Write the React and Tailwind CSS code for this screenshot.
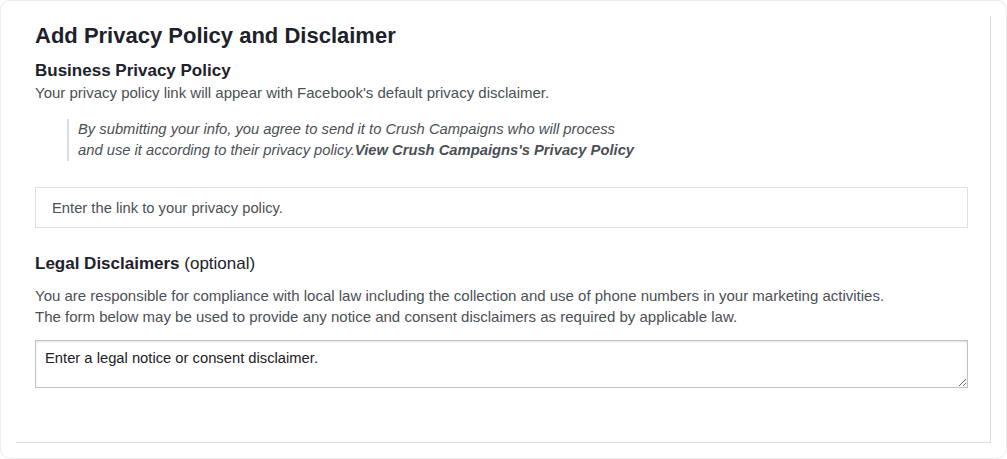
import React from 'react';

const App = () => {
    return (
        <div className="w-[1007px] h-[459px] bg-white font-['Liberation_Sans',Arial,sans-serif]">
            <div className="h-full rounded-[10px] border border-[#ececec] pt-[15px] pl-[15px] pr-[15px] pb-[15px]">
                <div className="h-[427px] border-r border-b border-[#dadde1] pt-[7px] pl-[19px] pr-[22px]">
                    <h1 className="text-[22px] leading-[26px] font-bold text-[#1d2129]">
                        Add Privacy Policy and Disclaimer
                    </h1>

                    <h2 className="mt-[12px] text-[17px] leading-[20px] font-bold text-[#1d2129]">
                        Business Privacy Policy
                    </h2>
                    <p className="mt-[3px] text-[15px] leading-[18px] text-[#4b4f56]">
                        Your privacy policy link will appear with Facebook's default privacy disclaimer.
                    </p>

                    <blockquote className="mt-[17px] ml-[32px] border-l-2 border-[#dadde1] pl-[9px] text-[14.75px] leading-[21px] italic text-[#4b4f56]">
                        By submitting your info, you agree to send it to Crush Campaigns who will process
                        <br />
                        and use it according to their privacy policy.
                        <span className="font-bold">View Crush Campaigns's Privacy Policy</span>
                    </blockquote>

                    <input
                        type="text"
                        placeholder="Enter the link to your privacy policy."
                        className="mt-[26px] block w-full h-[41px] border border-[#dddfe2] pl-[16px] text-[14.75px] text-[#4b4f56] placeholder:text-[#4b4f56] outline-none"
                    />

                    <h2 className="mt-[26px] text-[17px] leading-[20px] text-[#1d2129]">
                        <span className="font-bold">Legal Disclaimers</span> (optional)
                    </h2>
                    <p className="mt-[11px] text-[15px] leading-[21px] text-[#4b4f56]">
                        You are responsible for compliance with local law including the collection and use of phone numbers in your marketing activities.
                        <br />
                        The form below may be used to provide any notice and consent disclaimers as required by applicable law.
                    </p>

                    <textarea
                        placeholder="Enter a legal notice or consent disclaimer."
                        className="mt-[13px] block w-full h-[48px] border border-[#bec3c9] shadow-[inset_0_1px_2px_rgba(0,0,0,0.12)] pt-[9px] pl-[9px] text-[14.75px] leading-[17px] text-[#1d2129] placeholder:text-[#1d2129] outline-none resize-y"
                    />
                </div>
            </div>
        </div>
    );
};

export default App;
